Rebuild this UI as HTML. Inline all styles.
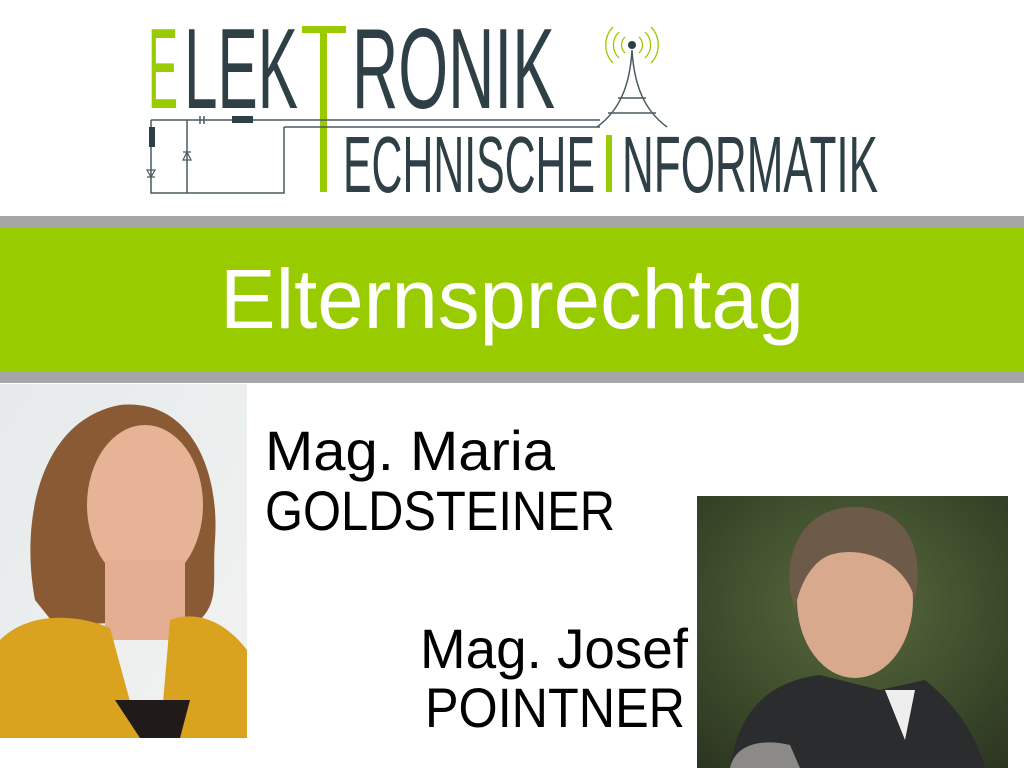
<!DOCTYPE html>
<html><head><meta charset="utf-8"><style>
html,body{margin:0;padding:0;background:#fff;width:1024px;height:768px;overflow:hidden}
svg{display:block}
</style></head><body>
<svg width="1024" height="768" viewBox="0 0 1024 768" xmlns="http://www.w3.org/2000/svg">
<defs>
<linearGradient id="wbg" x1="0" y1="0" x2="1" y2="1"><stop offset="0" stop-color="#e6eaeb"/><stop offset="1" stop-color="#f2f3f2"/></linearGradient>
<radialGradient id="mbg" cx="0.5" cy="0.4" r="0.8"><stop offset="0" stop-color="#5a6a3e"/><stop offset="0.6" stop-color="#3b4a2a"/><stop offset="1" stop-color="#2a3220"/></radialGradient>
</defs>
<!-- logo -->
<g font-family="'Liberation Sans Narrow','Liberation Sans',sans-serif">
<text x="148" y="108" font-size="114" textLength="30" lengthAdjust="spacingAndGlyphs" fill="#99cc00">E</text>
<text x="184" y="108" font-size="114" textLength="114" lengthAdjust="spacingAndGlyphs" fill="#2e3f45">LEK</text>
<text x="352" y="108" font-size="114" textLength="203" lengthAdjust="spacingAndGlyphs" fill="#2e3f45">RONIK</text>
<text x="343" y="192" font-size="80" textLength="252" lengthAdjust="spacingAndGlyphs" fill="#2e3f45">ECHNISCHE</text>
<text x="622" y="192" font-size="80" textLength="256" lengthAdjust="spacingAndGlyphs" fill="#2e3f45">NFORMATIK</text>
</g>
<rect x="302" y="26" width="44" height="7" fill="#99cc00"/>
<rect x="320" y="26" width="7" height="166" fill="#99cc00"/>
<rect x="606" y="135" width="6" height="57" fill="#99cc00"/>
<g stroke="#4a5a5f" stroke-width="1.5" fill="none">
<path d="M151 120H600M284 127H600M151 120V193H284V127M187 120V193"/>
<path d="M632 50C630 85 620 110 597 127M632 50C634 85 644 110 667 127M618 98H646M608 113H656"/>
<path d="M200 116V124M204 116V124"/>
</g>
<rect x="149" y="127" width="6" height="20" fill="#2e3f45"/>
<rect x="232" y="116" width="21" height="7" fill="#2e3f45"/>
<path d="M183 160h8l-4-8z M183 152h8" fill="none" stroke="#4a5a5f" stroke-width="1.2"/>
<path d="M147 170h8l-4 7z M147 177h8" fill="none" stroke="#4a5a5f" stroke-width="1.2"/>
<circle cx="632" cy="45" r="4" fill="#2e3f45"/>
<g stroke="#99cc00" stroke-width="1.3" fill="none">
<path d="M625 37a11 11 0 0 0 0 16M639 37a11 11 0 0 1 0 16M619 32a18 18 0 0 0 0 26M645 32a18 18 0 0 1 0 26M613 27a26 26 0 0 0 0 36M651 27a26 26 0 0 1 0 36"/>
</g>
<!-- bars -->
<rect x="0" y="216" width="1024" height="12" fill="#a6a6a6"/>
<rect x="0" y="228" width="1024" height="144" fill="#99cc00"/>
<rect x="0" y="372" width="1024" height="11" fill="#a6a6a6"/>
<text x="512" y="328" text-anchor="middle" font-family="'Liberation Sans',sans-serif" font-size="84" fill="#fff" textLength="584" lengthAdjust="spacingAndGlyphs">Elternsprechtag</text>
<!-- woman photo -->
<rect x="0" y="384" width="247" height="354" fill="url(#wbg)"/>
<path d="M35 600C20 520 40 420 120 405C190 398 220 470 215 540C212 580 220 600 200 620L55 625Z" fill="#8a5a35"/>
<ellipse cx="145" cy="505" rx="58" ry="80" fill="#e7b397"/>
<path d="M105 560h80v80h-80z" fill="#e4ae92"/>
<path d="M0 640C30 610 80 615 110 628L140 738H0Z" fill="#d9a21f"/>
<path d="M247 650C220 615 190 612 170 620L160 738H247Z" fill="#d9a21f"/>
<path d="M115 700L140 738H180L190 700Z" fill="#201a1a"/>
<!-- man photo -->
<rect x="697" y="496" width="311" height="272" fill="url(#mbg)"/>
<ellipse cx="855" cy="600" rx="58" ry="78" fill="#d9a98e"/>
<path d="M790 590C785 530 820 505 860 507C905 510 925 545 915 600C905 560 860 545 830 555C815 560 800 580 795 610Z" fill="#6e5a48"/>
<path d="M730 768C740 700 780 680 820 675L880 690L925 680C950 700 975 730 985 768Z" fill="#2b2c2e"/>
<path d="M730 768C735 745 760 738 790 745L800 768Z" fill="#8c8a86"/>
<path d="M885 690L905 740L915 690Z" fill="#eeeeee"/>
<!-- names -->
<g font-family="'Liberation Sans',sans-serif" font-size="56" fill="#000">
<text x="265" y="470" textLength="290" lengthAdjust="spacingAndGlyphs">Mag. Maria</text>
<text x="265" y="530" textLength="350" lengthAdjust="spacingAndGlyphs">GOLDSTEINER</text>
<text x="420" y="668" textLength="268" lengthAdjust="spacingAndGlyphs">Mag. Josef</text>
<text x="425" y="727" textLength="260" lengthAdjust="spacingAndGlyphs">POINTNER</text>
</g>
</svg>
</body></html>
